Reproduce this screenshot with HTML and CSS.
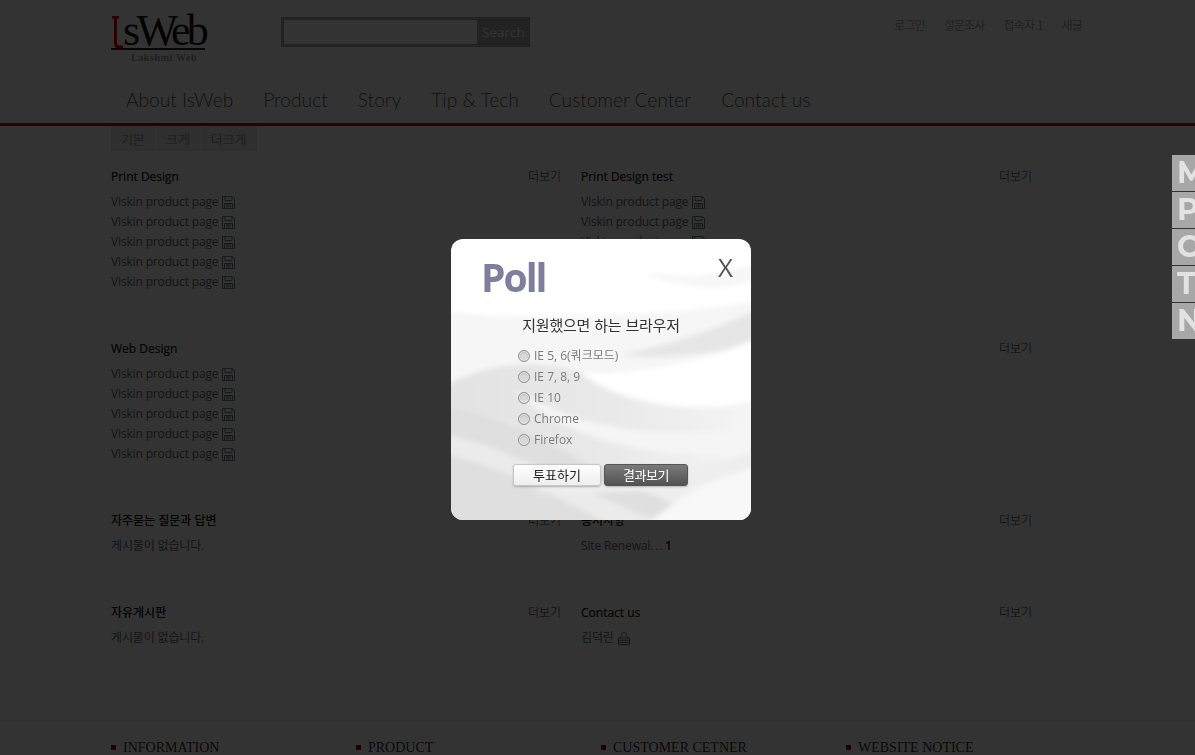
FILE: index.html
```html
<!DOCTYPE html>
<html lang="ko">
<head>
<meta charset="utf-8">
<title>IsWeb</title>
<link rel="stylesheet" href="styles.css">
</head>
<body>
<div class="page">
  <header class="header">
    <div class="wrap top">
      <a class="logo">
        <span class="logo-mark">
          <svg class="logo-l" viewBox="0 0 12 33" aria-hidden="true"><path d="M1 1h7M4.5 1v26q0 4 4 4H12" fill="none" stroke="#d00000" stroke-width="3"/></svg>
          <span class="logo-word">sWeb</span>
        </span>
        <span class="logo-sub">Lakshmi Web</span>
      </a>
      <form class="search"><span class="search-input"></span><span class="search-btn">Search</span></form>
      <ul class="util">
        <li>로그인</li><li>설문조사</li><li>접속자 1</li><li>새글</li>
      </ul>
    </div>
    <nav class="wrap nav">
      <a>About IsWeb</a><a>Product</a><a>Story</a><a>Tip &amp; Tech</a><a>Customer Center</a><a>Contact us</a>
    </nav>
  </header>
  <div class="wrap sizes"><span>기본</span><span>크게</span><span>더크게</span></div>
  <main class="wrap boards">
    <section class="board tall">
      <div class="board-head"><h3>Print Design</h3><a>더보기</a></div>
      <ul class="list">
        <li>Viskin product page <svg class="ico"><use href="#disk"/></svg></li>
        <li>Viskin product page <svg class="ico"><use href="#disk"/></svg></li>
        <li>Viskin product page <svg class="ico"><use href="#disk"/></svg></li>
        <li>Viskin product page <svg class="ico"><use href="#disk"/></svg></li>
        <li>Viskin product page <svg class="ico"><use href="#disk"/></svg></li>
      </ul>
    </section>
    <section class="board tall">
      <div class="board-head"><h3>Print Design test</h3><a>더보기</a></div>
      <ul class="list">
        <li>Viskin product page <svg class="ico"><use href="#disk"/></svg></li>
        <li>Viskin product page <svg class="ico"><use href="#disk"/></svg></li>
        <li>Viskin product page <svg class="ico"><use href="#disk"/></svg></li>
        <li>Viskin product page <svg class="ico"><use href="#disk"/></svg></li>
        <li>Viskin product page <svg class="ico"><use href="#disk"/></svg></li>
      </ul>
    </section>
    <section class="board tall">
      <div class="board-head"><h3>Web Design</h3><a>더보기</a></div>
      <ul class="list">
        <li>Viskin product page <svg class="ico"><use href="#disk"/></svg></li>
        <li>Viskin product page <svg class="ico"><use href="#disk"/></svg></li>
        <li>Viskin product page <svg class="ico"><use href="#disk"/></svg></li>
        <li>Viskin product page <svg class="ico"><use href="#disk"/></svg></li>
        <li>Viskin product page <svg class="ico"><use href="#disk"/></svg></li>
      </ul>
    </section>
    <section class="board tall">
      <div class="board-head"><h3>Web Design test</h3><a>더보기</a></div>
    </section>
    <section class="board short">
      <div class="board-head"><h3 class="ko">자주묻는 질문과 답변</h3><a>더보기</a></div>
      <ul class="list"><li>게시물이 없습니다.</li></ul>
    </section>
    <section class="board short">
      <div class="board-head"><h3 class="ko">공지사항</h3><a>더보기</a></div>
      <ul class="list"><li>Site Renewal<span class="ell">...</span> <b>1</b></li></ul>
    </section>
    <section class="board short">
      <div class="board-head"><h3 class="ko">자유게시판</h3><a>더보기</a></div>
      <ul class="list"><li>게시물이 없습니다.</li></ul>
    </section>
    <section class="board short">
      <div class="board-head"><h3>Contact us</h3><a>더보기</a></div>
      <ul class="list"><li>김덕린 <svg class="ico lock"><use href="#lock"/></svg></li></ul>
    </section>
  </main>
  <footer class="footer">
    <div class="wrap foot-cols">
      <h4>INFORMATION</h4><h4>PRODUCT</h4><h4>CUSTOMER CETNER</h4><h4>WEBSITE NOTICE</h4>
    </div>
  </footer>
</div>

<svg class="defs" aria-hidden="true">
  <symbol id="disk" viewBox="0 0 13 13">
    <path d="M.5.5h10l2 2v10H.5z M3 .5v4h7v-4 M2.5 12.5v-5h8v5 M4 9h5 M4 10.8h5" fill="none" stroke="currentColor"/>
  </symbol>
  <symbol id="lock" viewBox="0 0 12 13">
    <path d="M3 6V3.5a3 3 0 0 1 6 0V6 M.5 6h11v6.5H.5z M.5 8.2h11 M.5 10.4h11" fill="none" stroke="currentColor"/>
  </symbol>
  <filter id="soft"><feGaussianBlur stdDeviation="2.5"/></filter>
  <linearGradient id="fade" x1="0" y1="0" x2="1" y2="0">
    <stop offset="0" stop-color="#e2e2e2"/>
    <stop offset=".55" stop-color="#e9e9e9"/>
    <stop offset="1" stop-color="#f6f6f6"/>
  </linearGradient>
</svg>

<div class="overlay"></div>

<aside class="side-tabs">
  <a>M</a><a>P</a><a>C</a><a>T</a><a>N</a>
</aside>

<div class="poll">
  <svg class="poll-bg" viewBox="0 0 300 281" preserveAspectRatio="none" aria-hidden="true">
    <rect width="300" height="281" fill="#fff"/>
    <g filter="url(#soft)">
      <path d="M-10 72C70 82 190 80 310 62V150H-10Z" fill="#f6f6f6"/>
      <path d="M170 116C215 106 265 92 310 68V106C270 112 215 122 170 116Z" fill="#e6e6e6"/>
      <path d="M190 32C235 42 270 36 310 22V40C270 54 225 50 190 32Z" fill="#f7f7f7"/>
      <path d="M120 134C180 138 250 124 310 98V160C250 172 170 162 120 134Z" fill="#fff"/>
      <path d="M-10 150C30 124 90 118 130 134 170 166 250 178 310 160V290H-10Z" fill="url(#fade)"/>
      <path d="M-10 168C60 178 110 212 170 242 200 256 230 264 250 290H-10Z" fill="#dfdfdf"/>
    </g>
    <g filter="url(#soft)">
      <path d="M-10 195C60 205 150 265 230 290H170C110 262 50 225 -10 215Z" fill="#ebebeb"/>
      <path d="M60 150C110 175 170 205 310 190V212C190 226 110 195 60 150Z" fill="#f5f5f5"/>
      <path d="M190 290C230 255 270 235 310 225V290Z" fill="#f8f8f8"/>
      <path d="M80 255C150 238 240 242 310 208V224C240 258 150 252 80 255Z" fill="#eeeeee"/>
    </g>
  </svg>
  <div class="poll-head">
    <h2>Poll</h2>
    <span class="poll-close">X</span>
  </div>
  <p class="poll-q">지원했으면 하는 브라우저</p>
  <ul class="poll-opts">
    <li><input type="radio" name="b"><label>IE 5, 6(쿼크모드)</label></li>
    <li><input type="radio" name="b"><label>IE 7, 8, 9</label></li>
    <li><input type="radio" name="b"><label>IE 10</label></li>
    <li><input type="radio" name="b"><label>Chrome</label></li>
    <li><input type="radio" name="b"><label>Firefox</label></li>
  </ul>
  <div class="poll-btns">
    <button class="btn btn-light" type="button">투표하기</button>
    <button class="btn btn-dark" type="button">결과보기</button>
  </div>
</div>
</body>
</html>
```
FILE: styles.css
```css
* { box-sizing: border-box; }
html, body { margin: 0; padding: 0; height: 755px; overflow: hidden; background: #fff; }
body { font-family: "Open Sans", "Noto Sans CJK KR", sans-serif; font-size: 12px; color: #333; }
ul { list-style: none; margin: 0; padding: 0; }
h2, h3, h4, p { margin: 0; }
.defs { width: 0; height: 0; position: absolute; }

.page { width: 1195px; height: 755px; overflow: hidden; }
.wrap { width: 971px; margin-left: 111px; }

.header { height: 126px; border-bottom: 3px solid #d80000; }
.top { display: flex; height: 87px; padding-top: 13px; }
.logo { display: block; width: 170px; color: #000; }
.logo-mark { display: flex; width: 94px; height: 37px; border-bottom: 2px solid #222; }
.logo-l { flex: none; width: 12px; height: 33px; margin-top: 3px; }
.logo-word { font: 44px/36px "Liberation Serif", serif; letter-spacing: -3.6px; color: #111; }
.logo-sub { display: block; padding-left: 20px; font: bold 10px/13px "Liberation Serif", serif; letter-spacing: .6px; margin-top: 1px; color: #999; }
.search { display: flex; width: 249px; height: 30px; margin-top: 4px; background: #999; border: 3px solid #aaa; border-right: 0; }
.search-input { width: 193px; background: #fff; }
.search-btn { flex: 1; background: #aaa; color: #fff; font: 13.5px/24px "Open Sans", sans-serif; padding-left: 5px; }
.util { display: flex; gap: 19px; margin-left: 364px; font: 300 12px/24px "Noto Sans CJK KR", sans-serif; color: #777; letter-spacing: -.8px; white-space: nowrap; }

.nav { display: flex; gap: 30px; padding-left: 15px; font: 300 19.2px/26px "Lato", sans-serif; color: #555; white-space: nowrap; }

.sizes { display: flex; height: 25px; gap: 1px; font: 300 13px/25px "Noto Sans CJK KR", sans-serif; color: #777; }
.sizes span { background: #e8e8e8; padding: 0 10px; }

.boards { display: grid; grid-template-columns: 450px 451px; column-gap: 20px; padding-top: 17px; }
.board.tall { height: 172px; }
.board.short { height: 92px; }
.board-head { display: flex; justify-content: space-between; height: 24px; }
.board-head h3 { font-size: 12px; font-weight: 400; color: #111; line-height: 18px; -webkit-text-stroke: .2px #111; }
.board-head h3.ko { font-weight: 500; -webkit-text-stroke: 0; }
.board-head a { font: 300 12px/16px "Noto Sans CJK KR", sans-serif; color: #222; }
.list li { height: 20px; line-height: 20px; color: #666; font-size: 12px; letter-spacing: -.15px; display: flex; align-items: center; white-space: pre; }
.list b { color: #222; font-weight: 600; }
.ell { letter-spacing: 1.8px; }
.ico { width: 13px; height: 13px; color: #707c7c; margin-left: 1px; }
.lock { width: 12px; height: 13px; }

.footer { margin-top: 24px; height: 60px; border-top: 1px solid #f2f2f2; box-shadow: 0 -3px 6px rgba(0,0,0,.04); }
.foot-cols { display: grid; grid-template-columns: repeat(4, 245px); padding-top: 19px; }
.foot-cols h4 { font: 14px/16px "Liberation Serif", serif; color: #333; padding-left: 12px; position: relative; }
.foot-cols h4::before { content: ""; position: absolute; left: 0; top: 5px; width: 5px; height: 5px; background: #a00000; }

.overlay { position: fixed; inset: 0; background: rgba(0,0,0,.8); }

.side-tabs { position: fixed; left: 1172px; top: 155px; width: 23px; overflow: hidden; display: flex; flex-direction: column; gap: 1px; }
.side-tabs a { height: 36px; background: #a7a7a7; color: #e2e2e2; font: bold 30px/36px "Montserrat", "Open Sans", sans-serif; padding-left: 5px; }

.poll { position: fixed; left: 451px; top: 239px; width: 300px; height: 281px; border-radius: 12px; overflow: hidden; display: flex; flex-direction: column; }
.poll-bg { position: absolute; inset: 0; width: 100%; height: 100%; }
.poll-head, .poll-q, .poll-opts, .poll-btns { position: relative; }
.poll-head { height: 66px; display: flex; justify-content: space-between; padding: 13px 18px 0 30px; }
.poll-head h2 { font: bold 39px/50px "Open Sans", sans-serif; color: #7e7f9c; letter-spacing: -2px; }
.poll-close { font: 400 26px/30px "Open Sans", sans-serif; color: #555; }
.poll-q { height: 33px; text-align: center; font: 400 15px/39px "Noto Sans CJK KR", sans-serif; color: #333; letter-spacing: -.2px; }
.poll-opts { padding: 7px 0 0 67px; }
.poll-opts li { display: flex; align-items: center; height: 21px; color: #7b7b7b; font-size: 12px; }
.poll-opts label { line-height: 16px; height: 16px; }
.poll-opts input { appearance: none; width: 12px; height: 12px; margin: 0 4px 0 0; border-radius: 50%; border: 1px solid #8f8f8f; background: radial-gradient(circle at 50% 60%, #d8d8d8 0 3px, #bdbdbd 5px); box-shadow: inset 0 0 0 1px #eee; }
.poll-btns { display: flex; gap: 3px; padding: 14px 0 0 62px; }
.btn { height: 22px; border-radius: 3px; font: 400 13px/20px "Noto Sans CJK KR", sans-serif; padding: 0; cursor: pointer; box-shadow: 0 1px 2px rgba(0,0,0,.25); }
.btn-light { width: 88px; border: 1px solid #c8c8c8; background: linear-gradient(#fff, #eee); color: #222; }
.btn-dark { width: 84px; border: 1px solid #555; background: linear-gradient(#7a7a7a, #525252); color: #fff; letter-spacing: -.5px; }
```
